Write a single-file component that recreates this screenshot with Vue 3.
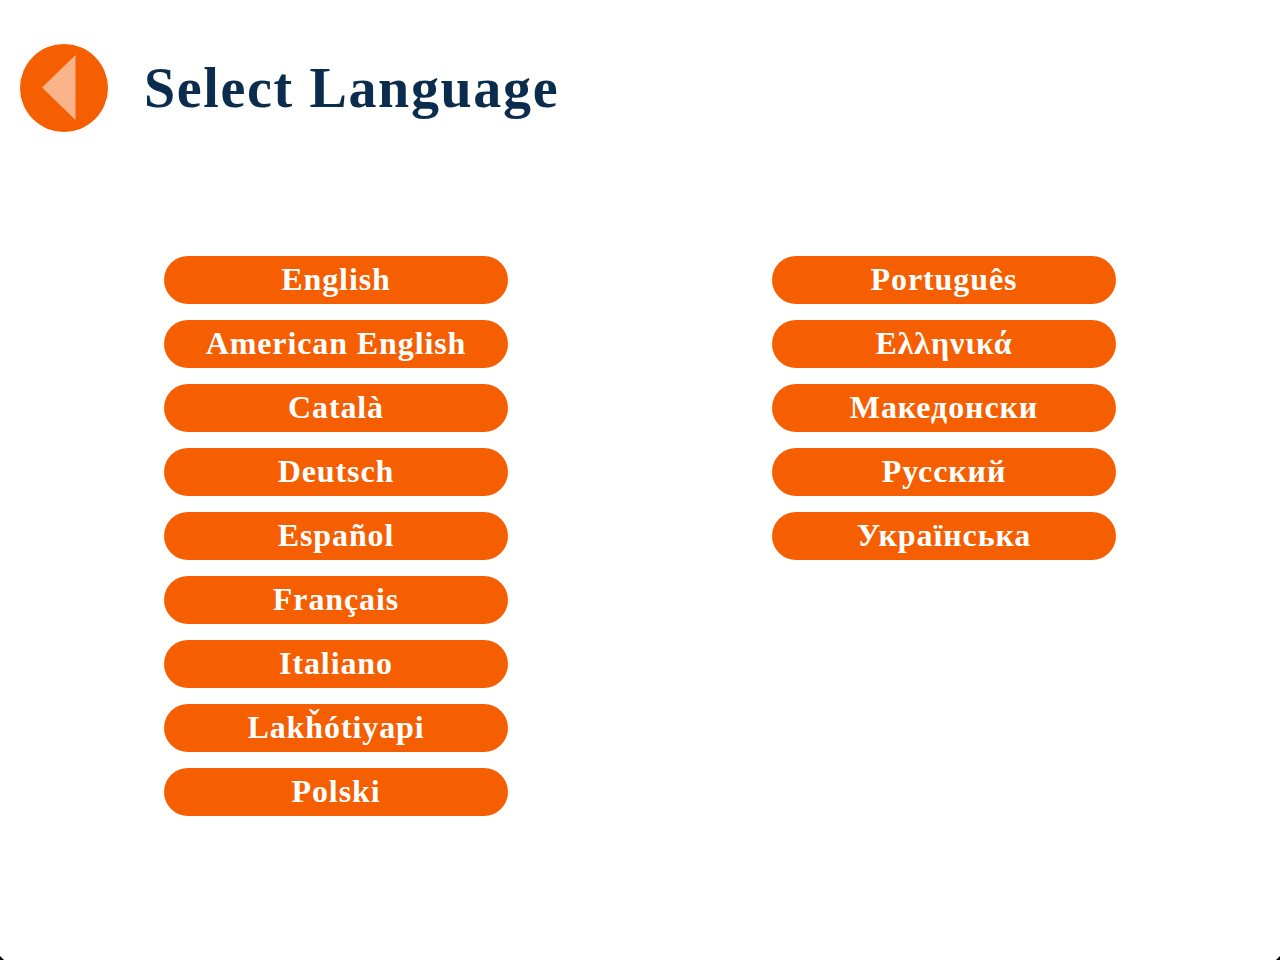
<script setup>
const columns = [
  ['English', 'American English', 'Català', 'Deutsch', 'Español', 'Français', 'Italiano', 'Lakȟótiyapi', 'Polski'],
  ['Português', 'Ελληνικά', 'Македонски', 'Русский', 'Українська']
]
</script>

<template>
  <div class="page">
    <header class="head">
      <button class="back" aria-label="Back">
        <svg width="88" height="88" viewBox="0 0 88 88">
          <circle cx="44" cy="44" r="44" fill="#f55f02" />
          <path d="M55.5 11 L22 43.5 L55.5 76 Z" fill="#fbb389" />
        </svg>
      </button>
      <h1 class="title">Select Language</h1>
    </header>
    <main class="cols">
      <div v-for="(col, i) in columns" :key="i" class="col">
        <button v-for="name in col" :key="name" class="lang">{{ name }}</button>
      </div>
    </main>
    <i class="corner left"></i>
    <i class="corner right"></i>
  </div>
</template>

<style>
html, body { margin: 0; background: #fff; }
</style>

<style scoped>
.page {
  position: relative;
  width: 1280px;
  height: 960px;
  overflow: hidden;
  background: #fff;
  box-sizing: border-box;
  padding: 44px 0 0 20px;
  font-family: "Liberation Serif", "Noto Sans CJK SC", serif;
}
.head {
  display: flex;
  align-items: center;
  gap: 36px;
  height: 88px;
}
.back {
  padding: 0;
  border: 0;
  background: none;
  width: 88px;
  height: 88px;
  display: block;
}
.back svg { display: block; }
.title {
  margin: 0;
  font-size: 56px;
  line-height: 88px;
  font-weight: 700;
  color: #0b2d4d;
  letter-spacing: 1.65px;
}
.cols {
  display: flex;
  gap: 264px;
  margin: 124px 0 0 144px;
}
.col {
  display: flex;
  flex-direction: column;
  gap: 16px;
  width: 344px;
}
.lang {
  height: 48px;
  padding: 0 0 1px;
  border: 0;
  border-radius: 24px;
  background: #f55f02;
  color: #fff;
  font-family: inherit;
  font-size: 32px;
  font-weight: 700;
  letter-spacing: 0.9px;
  line-height: 45px;
  text-align: center;
}
.corner {
  position: absolute;
  bottom: 0;
  width: 4px;
  height: 4px;
  background: #000;
}
.corner.left {
  left: 0;
  clip-path: polygon(0 0, 100% 100%, 0 100%);
}
.corner.right {
  right: 0;
  clip-path: polygon(100% 0, 100% 100%, 0 100%);
}
</style>
